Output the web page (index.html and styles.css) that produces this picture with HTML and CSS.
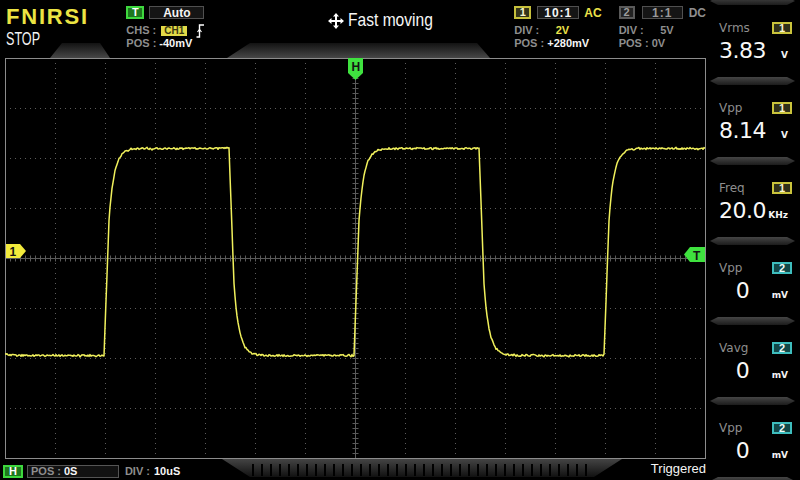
FILE: index.html
```html
<!DOCTYPE html>
<html lang="en">
<head>
<meta charset="utf-8">
<title>FNIRSI oscilloscope</title>
<link rel="stylesheet" href="styles.css">
</head>
<body>
<div class="screen">
  <div class="main">
    <header class="top">
      <svg class="top-deco" width="706" height="58" viewBox="0 0 706 58" aria-hidden="true">
        <defs>
          <linearGradient id="tg" x1="0" y1="0" x2="0" y2="1">
            <stop offset="0" stop-color="#121212"/>
            <stop offset="1" stop-color="#474747"/>
          </linearGradient>
        </defs>
        <polygon points="50,58 62,43 100,43 110,58" fill="url(#tg)"/>
        <polygon points="227,58 250,43 477,43 490,58" fill="url(#tg)"/>
      </svg>
      <div class="brand">
        <div class="logo">FNIRSI</div>
        <div class="state">STOP</div>
      </div>
      <div class="trig">
        <div class="row r1"><span class="badge b-green">T</span><span class="box auto">Auto</span></div>
        <div class="row r2"><span class="lbl">CHS :</span><span class="chip">CH1</span>
          <svg class="edge" width="9" height="14" viewBox="0 0 9 14"><path d="M0.5 13 H3.5 V1 H8" fill="none" stroke="#fff" stroke-width="1.4"/><path d="M1.5 8 L3.5 5.5 L5.5 8" fill="none" stroke="#fff" stroke-width="1.2"/></svg>
        </div>
        <div class="row r3"><span class="lbl">POS :</span><span class="val">-40mV</span></div>
      </div>
      <div class="mode">
        <svg class="move" width="16" height="16" viewBox="0 0 16 16" aria-hidden="true">
          <path d="M8 2 V14 M2 8 H14" stroke="#fff" stroke-width="2"/>
          <path d="M8 0 L11 3.5 H5 Z M8 16 L11 12.5 H5 Z M0 8 L3.5 5 V11 Z M16 8 L12.5 5 V11 Z" fill="#fff"/>
        </svg>
        <span class="mode-text">Fast moving</span>
      </div>
      <div class="ch">
        <div class="row r1"><span class="badge b-ch1">1</span><span class="box ratio">10:1</span><span class="cpl yel">AC</span></div>
        <div class="row r2"><span class="lbl">DIV :</span><span class="dv yel">2V</span></div>
        <div class="row r3"><span class="lbl">POS :</span><span class="val">+280mV</span></div>
      </div>
      <div class="ch ch2">
        <div class="row r1"><span class="badge b-off">2</span><span class="box ratio off">1:1</span><span class="cpl grey">DC</span></div>
        <div class="row r2"><span class="lbl">DIV :</span><span class="dv grey">5V</span></div>
        <div class="row r3"><span class="lbl">POS :</span><span class="val grey">0V</span></div>
      </div>
    </header>

    <div class="plot">
      <svg width="701" height="401" viewBox="0 0 701 401">
        <g class="dots" stroke="#5c5c5c" stroke-width="1" stroke-dasharray="1 4">
          <line x1="50.5" y1="0" x2="50.5" y2="401"/>
          <line x1="100.5" y1="0" x2="100.5" y2="401"/>
          <line x1="150.5" y1="0" x2="150.5" y2="401"/>
          <line x1="200.5" y1="0" x2="200.5" y2="401"/>
          <line x1="250.5" y1="0" x2="250.5" y2="401"/>
          <line x1="300.5" y1="0" x2="300.5" y2="401"/>
          <line x1="400.5" y1="0" x2="400.5" y2="401"/>
          <line x1="450.5" y1="0" x2="450.5" y2="401"/>
          <line x1="500.5" y1="0" x2="500.5" y2="401"/>
          <line x1="550.5" y1="0" x2="550.5" y2="401"/>
          <line x1="600.5" y1="0" x2="600.5" y2="401"/>
          <line x1="650.5" y1="0" x2="650.5" y2="401"/>
          <line x1="0" y1="50.5" x2="701" y2="50.5"/>
          <line x1="0" y1="100.5" x2="701" y2="100.5"/>
          <line x1="0" y1="150.5" x2="701" y2="150.5"/>
          <line x1="0" y1="250.5" x2="701" y2="250.5"/>
          <line x1="0" y1="300.5" x2="701" y2="300.5"/>
          <line x1="0" y1="350.5" x2="701" y2="350.5"/>
        </g>
        <g class="axes" stroke="#5a5a5a">
          <line x1="0" y1="200.5" x2="701" y2="200.5" stroke-width="1"/>
          <line x1="350.5" y1="0" x2="350.5" y2="401" stroke-width="1"/>
          <line x1="0" y1="200.5" x2="701" y2="200.5" stroke-width="6" stroke-dasharray="1 4" stroke-dashoffset="-0"/>
          <line x1="350.5" y1="0" x2="350.5" y2="401" stroke-width="6" stroke-dasharray="1 4"/>
        </g>
        <rect x="0.5" y="0.5" width="700" height="400" fill="none" stroke="#8c8c8c" stroke-width="1"/>
        <polyline id="trace" points="" fill="none" stroke="#f0f05c" stroke-width="1.5" stroke-linejoin="round"/>
        <g class="marker">
          <polygon points="1,186 15,186 21,193 15,200 1,200" fill="#f2ea3c"/>
          <text x="4.5" y="198" class="mk-text">1</text>
          <polygon points="700,189 685,189 679,196.5 685,204 700,204" fill="#3fe23f"/>
          <text x="688" y="201.5" class="mk-text">T</text>
          <polygon points="343,0 358,0 358,15 350.5,22 343,15" fill="#3fe23f"/>
          <text x="346.5" y="12.5" class="mk-text">H</text>
        </g>
      </svg>
    </div>

    <footer class="bottom">
      <span class="badge b-green hb">H</span>
      <span class="box hpos"><span class="lbl">POS :</span><span class="val">0S</span></span>
      <span class="hdiv"><span class="lbl">DIV :</span><span class="val">10uS</span></span>
      <svg class="scroll" width="400" height="21" viewBox="0 0 400 21" aria-hidden="true">
        <defs>
          <linearGradient id="sg" x1="0" y1="0" x2="0" y2="1">
            <stop offset="0" stop-color="#444"/>
            <stop offset="1" stop-color="#111"/>
          </linearGradient>
        </defs>
        <polygon points="0,0 400,0 372,18 28,18" fill="url(#sg)"/>
        <line x1="30" y1="11" x2="372" y2="11" stroke="#000" stroke-width="12" stroke-dasharray="2 7"/>
      </svg>
      <span class="trg">Triggered</span>
    </footer>
  </div>

  <aside class="panel">
    <div class="sep"></div>
    <div class="meas">
      <div class="m-head"><span class="m-label">Vrms</span><span class="mbadge c1">1</span></div>
      <div class="m-val"><span class="num">3.83</span><span class="unit">V</span></div>
    </div>
    <div class="sep"></div>
    <div class="meas">
      <div class="m-head"><span class="m-label">Vpp</span><span class="mbadge c1">1</span></div>
      <div class="m-val"><span class="num">8.14</span><span class="unit">V</span></div>
    </div>
    <div class="sep"></div>
    <div class="meas">
      <div class="m-head"><span class="m-label">Freq</span><span class="mbadge c1">1</span></div>
      <div class="m-val"><span class="num">20.0</span><span class="unit">KHz</span></div>
    </div>
    <div class="sep"></div>
    <div class="meas">
      <div class="m-head"><span class="m-label">Vpp</span><span class="mbadge c2">2</span></div>
      <div class="m-val"><span class="num">0</span><span class="unit">mV</span></div>
    </div>
    <div class="sep"></div>
    <div class="meas">
      <div class="m-head"><span class="m-label">Vavg</span><span class="mbadge c2">2</span></div>
      <div class="m-val"><span class="num">0</span><span class="unit">mV</span></div>
    </div>
    <div class="sep"></div>
    <div class="meas">
      <div class="m-head"><span class="m-label">Vpp</span><span class="mbadge c2">2</span></div>
      <div class="m-val"><span class="num">0</span><span class="unit">mV</span></div>
    </div>
    <div class="sep"></div>
  </aside>
</div>
<script src="script.js"></script>
</body>
</html>
```

FILE: styles.css
```css
* { box-sizing: border-box; margin: 0; padding: 0; }
html, body { width: 800px; height: 480px; background: #000; overflow: hidden; }
body { font-family: "Liberation Sans", Arial, sans-serif; color: #f2f2f2; }

.screen { display: flex; width: 800px; height: 480px; overflow: hidden; }
.main { width: 706px; flex: none; display: flex; flex-direction: column; }

/* header */
.top { position: relative; height: 58px; flex: none; display: flex; padding-left: 6px; }
.top-deco { position: absolute; left: 0; top: 0; z-index: 0; }
.top > div { position: relative; z-index: 1; }

.brand { width: 121px; padding-top: 5px; }
.logo { font-weight: 700; font-size: 22px; line-height: 23px; color: #ece443; letter-spacing: 1.8px; }
.state { display: inline-block; font-size: 18px; line-height: 18px; margin-top: 2px; color: #f4f4f4; transform: scaleX(0.7); transform-origin: left center; }

.row { display: flex; align-items: center; }
.r1 { height: 13px; }
.r2 { height: 11px; margin-top: 6px; }
.r3 { height: 11px; margin-top: 2px; }

.trig { width: 203px; padding-top: 6px; }
.ch { width: 105px; padding-top: 6px; }
.ch2 { width: auto; }

.badge { display: flex; align-items: center; justify-content: center; height: 13px; border: 2px solid; font-weight: 700; font-size: 11px; line-height: 1; }
.b-green { width: 18px; background: #1e781e; border-color: #3ed83e; color: #fff; }
.b-ch1 { width: 17px; background: #34341a; border-color: #c6c03c; color: #f6f3cf; }
.b-off { width: 16px; background: #222; border-color: #5a5a5a; color: #9c9c9c; }

.box { display: flex; align-items: center; justify-content: center; height: 13px; border: 1px solid #505050; background: #151515; font-weight: 700; font-size: 12px; line-height: 1; color: #f4f4f4; }
.auto { width: 55px; margin-left: 5px; }
.ratio { width: 42px; margin-left: 6px; letter-spacing: 1px; }
.ratio.off { width: 41px; margin-left: 7px; color: #9a9a9a; }
.cpl { margin-left: 5px; font-weight: 700; font-size: 12px; }
.ch2 .cpl { margin-left: 6px; }

.lbl { width: 33px; flex: none; color: #8e8e8e; font-weight: 700; font-size: 11px; line-height: 1; }
.val { font-weight: 700; font-size: 11px; line-height: 1; color: #f6f6f6; }
.dv { width: 22px; text-align: right; font-weight: 700; font-size: 11px; line-height: 1; }
.yel { color: #ebe24a; }
.grey { color: #8e8e8e; }
.val.grey { color: #8e8e8e; }

.chip { width: 26px; height: 10px; margin-left: 2px; display: flex; align-items: center; justify-content: center; background: #e2da48; color: #3a3810; font-weight: 700; font-size: 10px; line-height: 1; }
.edge { margin-left: 9px; }

.mode { width: 187px; padding-top: 13px; display: flex; align-items: flex-start; }
.move { flex: none; margin-top: 0; }
.mode-text { display: inline-block; margin-left: 4px; margin-top: -3px; font-size: 19px; line-height: 20px; white-space: nowrap; transform: scaleX(0.82); transform-origin: left center; color: #f6f6f6; }

/* plot */
.plot { height: 401px; flex: none; padding-left: 5px; }
.plot svg { display: block; }
.mk-text { font-family: "Liberation Sans", Arial, sans-serif; font-weight: 700; font-size: 12px; fill: #141414; }

/* footer */
.bottom { height: 21px; flex: none; display: flex; align-items: flex-start; padding-left: 3px; }
.hb { width: 20px; margin-top: 6px; }
.hpos { width: 92px; margin-left: 4px; margin-top: 6px; justify-content: flex-start; padding-left: 3px; background: #121212; border-color: #555; }
.hdiv { width: 97px; margin-left: 6px; margin-top: 7px; display: flex; align-items: center; }
.hdiv .lbl { width: 29px; }
.scroll { flex: none; display: block; }
.trg { margin-left: 29px; margin-top: 2px; font-size: 13px; line-height: 15px; color: #f4f4f4; }

/* right panel */
.panel { width: 94px; flex: none; display: flex; flex-direction: column; margin-top: -3px; padding: 0 5px 0 4px; }
.sep { height: 8px; flex: none; background: linear-gradient(#454545, #1c1c1c); clip-path: polygon(8px 0, calc(100% - 8px) 0, 100% 50%, calc(100% - 8px) 100%, 8px 100%, 0 50%); }
.meas { height: 72px; flex: none; padding: 16px 3px 0 9px; }
.m-head { display: flex; justify-content: space-between; align-items: center; height: 14px; }
.m-label { font-family: "DejaVu Sans", Verdana, sans-serif; font-size: 12px; line-height: 14px; color: #8e8e8e; }
.mbadge { width: 20px; height: 12px; border: 2px solid; display: flex; align-items: center; justify-content: center; font-weight: 700; font-size: 11px; line-height: 1; }
.c1 { border-color: #c9c33c; background: #30301a; color: #f6f3d2; }
.c2 { border-color: #3ebdbd; background: #124848; color: #eefcfc; }
.m-val { display: flex; align-items: baseline; margin-top: 5px; height: 22px; }
.num { width: 47px; flex: none; text-align: center; font-family: "DejaVu Sans", Verdana, sans-serif; font-size: 22px; line-height: 22px; letter-spacing: -0.5px; color: #f8f8f8; }
.unit { width: 26px; flex: none; text-align: right; padding-right: 4px; font-family: "DejaVu Sans", Verdana, sans-serif; font-weight: 700; font-size: 9px; color: #f4f4f4; }
```

FILE: script.js
```js
(function () {
  var el = document.getElementById('trace');
  if (!el) return;
  var seed = 12345;
  function rnd() { seed = (seed * 16807) % 2147483647; return seed / 2147483647; }
  var HI = 90, LO = 297;
  function d(t) { return t < 5 ? 207 - 27 * t : 72 * Math.exp(-(t - 5) / 5.2); }
  var pts = [];
  for (var x = 0; x <= 700; x += 1) {
    var p = ((x - 99) % 250 + 250) % 250;
    var y = p < 125 ? HI + d(p) : LO - d(p - 125);
    var n = (rnd() - 0.5) * 1.8;
    if (rnd() < 0.08) n += (rnd() - 0.5) * 2.2;
    pts.push(x + ',' + (y + n + 0.5).toFixed(1));
  }
  el.setAttribute('points', pts.join(' '));
})();
```
